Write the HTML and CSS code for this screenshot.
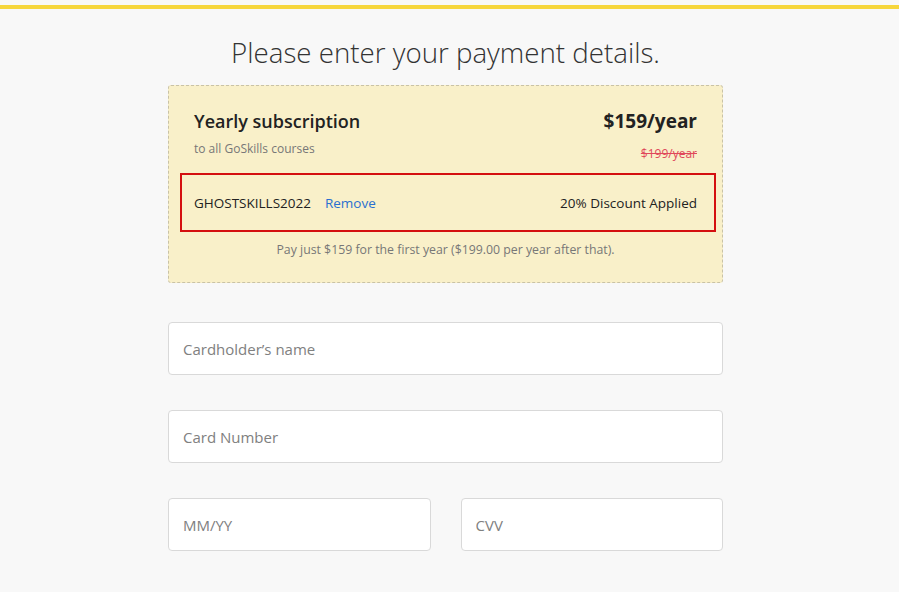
FILE: index.html
```html
<!DOCTYPE html>
<html>
<head>
<meta charset="utf-8">
<title>Payment details</title>
<link rel="stylesheet" href="styles.css">
</head>
<body>
<div class="topbar"></div>

<div class="page">
	<h1 class="title">Please enter your payment details.</h1>

	<div class="summary">
		<div class="plan">
			<div class="plan-name">
				<div class="plan-title">Yearly subscription</div>
				<div class="plan-sub">to all GoSkills courses</div>
			</div>
			<div class="plan-price">
				<div class="price-now">$159/year</div>
				<div class="price-old">$199/year</div>
			</div>
		</div>

		<div class="coupon">
			<span class="coupon-code">GHOSTSKILLS2022</span>
			<a class="coupon-remove" href="#">Remove</a>
			<span class="coupon-note">20% Discount Applied</span>
		</div>

		<div class="summary-note">Pay just $159 for the first year ($199.00 per year after that).</div>
	</div>

	<form class="card-form">
		<input class="field" type="text" placeholder="Cardholder’s name">
		<input class="field" type="text" placeholder="Card Number">
		<div class="field-row">
			<input class="field" type="text" placeholder="MM/YY">
			<input class="field" type="text" placeholder="CVV">
		</div>
	</form>
</div>
</body>
</html>
```

FILE: styles.css
```css
* {
	box-sizing: border-box;
}

body {
	margin: 0;
	padding-top: 5px;
	background-color: #f8f8f8;
	font-family: "Open Sans", "Noto Sans", sans-serif;
	color: #222;
}

.topbar {
	height: 4px;
	background-color: #f6d63c;
}

.page {
	width: 555px;
	margin-left: 168px;
}

.title {
	margin: 25px 0 14px;
	font-size: 27.7px;
	font-weight: 300;
	line-height: 37px;
	text-align: center;
	color: #333;
}

.summary {
	background-color: #f9f0c9;
	border: 1px dashed #c9c2a6;
	border-radius: 3px;
	padding: 21px 25px 24px;
}

.plan {
	display: flex;
	justify-content: space-between;
}

.plan-title,
.price-now {
	font-size: 18px;
	font-weight: 600;
	line-height: 28px;
	color: #222;
}

.price-now {
	font-size: 19px;
	font-weight: 700;
}

.plan-sub {
	margin-top: 6px;
	font-size: 12px;
	line-height: 16px;
	color: #777;
}

.plan-price {
	text-align: right;
}

.price-old {
	margin-top: 11px;
	font-size: 12px;
	line-height: 16px;
	color: #e0485a;
	text-decoration: line-through;
}

.coupon {
	display: flex;
	align-items: center;
	height: 59px;
	margin: 11px -19px 0 -14px;
	padding: 0 17px 0 12px;
	border: 2px solid #d40f0f;
	font-size: 13.5px;
}

.coupon-code {
	color: #222;
}

.coupon-remove {
	margin-left: 14px;
	color: #2a6fd0;
	text-decoration: none;
}

.coupon-note {
	margin-left: auto;
	color: #222;
}

.summary-note {
	margin-top: 10px;
	font-size: 12.3px;
	line-height: 16px;
	text-align: center;
	color: #777;
}

.card-form {
	display: flex;
	flex-direction: column;
	gap: 35px;
	margin-top: 39px;
}

.field {
	width: 100%;
	height: 53px;
	padding: 0 14px;
	border: 1px solid #d9d9d9;
	border-radius: 4px;
	background-color: #fff;
	font-family: inherit;
	font-size: 15px;
	color: #333;
}

.field::placeholder {
	color: #808080;
}

.field-row {
	display: flex;
	gap: 30px;
}
```
